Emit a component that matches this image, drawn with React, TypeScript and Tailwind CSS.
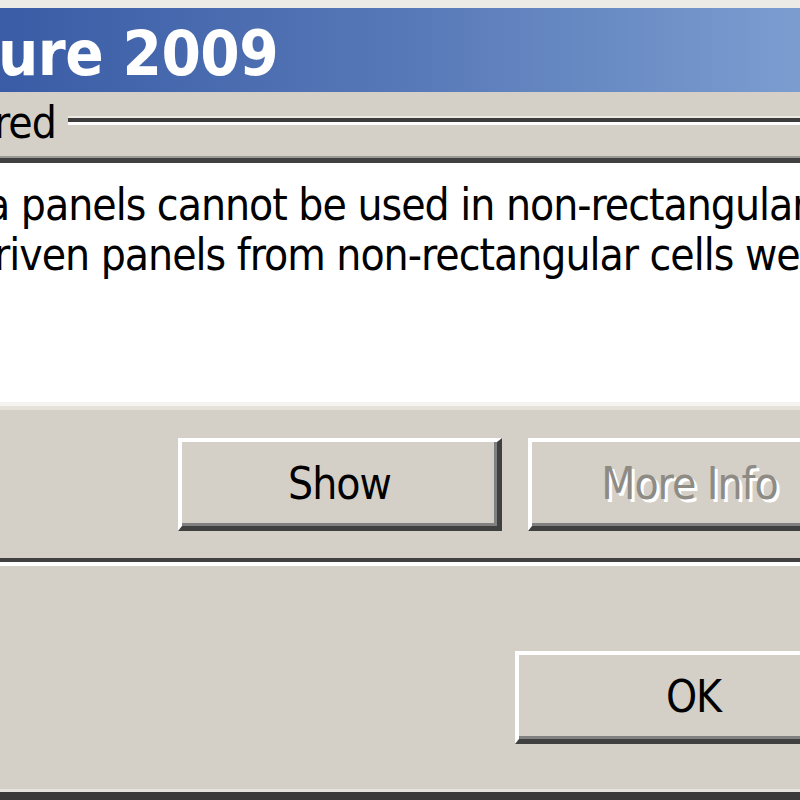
import React from 'react';

const ui = "font-['DejaVu_Sans_Condensed','DejaVu_Sans',sans-serif]";

function ClassicButton({
  label,
  width,
  disabled,
}: {
  label: string;
  width: string;
  disabled?: boolean;
}) {
  return (
    <div
      className={`${width} h-[93px] shrink-0 flex items-center justify-center bg-[#d4d0c8] border-t-4 border-l-4 border-t-white border-l-white border-b-[5px] border-r-[5px] border-b-[#404040] border-r-[#404040] shadow-[inset_-3px_-3px_0_#808080]`}
    >
      <span
        className={
          disabled
            ? 'text-[#8e8b85] [text-shadow:3px_3px_0_#ffffff]'
            : 'text-black'
        }
      >
        {label}
      </span>
    </div>
  );
}

export default function App() {
  return (
    <div
      className={`${ui} w-[800px] h-[800px] overflow-hidden bg-[#d4d0c8] flex flex-col text-[44px] leading-[50px] tracking-[-1px]`}
    >
      {/* window frame top */}
      <div className="h-[8px] shrink-0 bg-[#ecebe6]" />

      {/* title bar */}
      <div className="h-[84px] shrink-0 flex items-center bg-gradient-to-r from-[#3a5ca6] via-[#5778b7] to-[#7b9dd0]">
        <span className="-ml-[2px] mt-[6px] whitespace-nowrap font-bold text-white text-[63px] leading-none tracking-[-0.5px]">
          ure 2009
        </span>
      </div>

      {/* group box header */}
      <div className="h-[64px] shrink-0 flex items-center">
        <span className="-ml-[6px] -mt-[2px] whitespace-nowrap text-black">red</span>
        <div className="flex-1 ml-[12px] -mt-[8px] flex flex-col">
          <div className="h-[2px] bg-[#ece9e2]" />
          <div className="h-[4px] bg-[#3c3c3c]" />
          <div className="h-[3px] bg-white" />
        </div>
      </div>

      {/* message box */}
      <div className="h-[2px] shrink-0 bg-[#9a9892]" />
      <div className="h-[5px] shrink-0 bg-[#404040]" />
      <div className="h-[239px] shrink-0 bg-white pt-[17px] text-black">
        <div className="-ml-[14px] whitespace-nowrap">
          a panels cannot be used in non-rectangular
        </div>
        <div className="-ml-[6px] whitespace-nowrap">
          riven panels from non-rectangular cells were
        </div>
      </div>
      <div className="h-[4px] shrink-0 bg-[#f4f3f0]" />
      <div className="h-[4px] shrink-0 bg-[#e4e1db]" />

      {/* detail buttons */}
      <div className="h-[148px] shrink-0 flex items-start pt-[28px] pl-[178px] gap-[26px]">
        <ClassicButton label="Show" width="w-[324px]" />
        <ClassicButton label="More Info" width="w-[324px]" disabled />
      </div>

      {/* separator */}
      <div className="h-[4px] shrink-0 bg-[#404040]" />
      <div className="h-[4px] shrink-0 bg-white" />

      {/* footer */}
      <div className="flex-1 flex items-start pt-[85px] pl-[515px]">
        <ClassicButton label="OK" width="w-[358px]" />
      </div>

      {/* window frame bottom */}
      <div className="h-[3px] shrink-0 bg-[#e6e3dc]" />
      <div className="h-[8px] shrink-0 bg-[#3a3a3a]" />
    </div>
  );
}
